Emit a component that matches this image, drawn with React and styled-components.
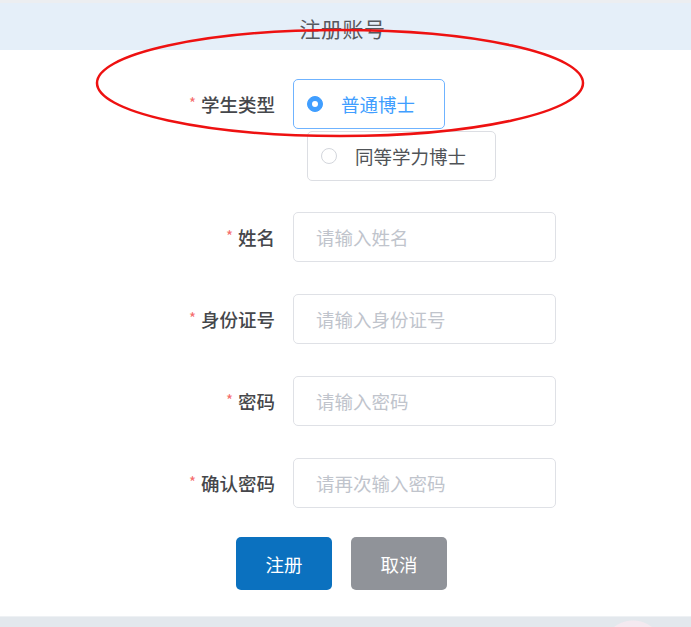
import styled, { createGlobalStyle } from "styled-components"

const GlobalStyle = createGlobalStyle`
  html, body, #root {
    height: 100%;
  }
  body {
    margin: 0;
    background: #ffffff;
    font-family: "Noto Sans CJK SC", "Noto Sans", "Liberation Sans", sans-serif;
  }
`;

const Page = styled.div`
  position: relative;
  display: flex;
  flex-direction: column;
  height: 100vh;
  overflow: hidden;
  border-top: 3px solid #eceef1;
  box-sizing: border-box;
`;

const Header = styled.div`
  flex-shrink: 0;
  height: 47px;
  box-sizing: border-box;
  padding: 2px 6px 0 0;
  background: #e5eff9;
  display: flex;
  align-items: center;
  justify-content: center;
  color: #56595e;
  font-size: 21px;
  letter-spacing: 0.5px;
`;

const Body = styled.div`
  flex: 1;
  padding-top: 29px;
`;

const Row = styled.div`
  display: flex;
  align-items: flex-start;
  margin-bottom: ${p => p.gap ?? 32}px;
`;

const Label = styled.label`
  width: 293px;
  box-sizing: border-box;
  padding-right: 18px;
  height: 50px;
  display: flex;
  align-items: center;
  justify-content: flex-end;
  color: #45474b;
  font-size: 18.5px;
  font-weight: 500;
`;

const Star = styled.span`
  color: #f56c6c;
  font-size: 15px;
  font-weight: 400;
  margin-right: 5px;
  position: relative;
  top: -2px;
`;

const RadioGroup = styled.div`
  display: flex;
  flex-direction: column;
  align-items: flex-start;
  gap: 2px;
`;

const RadioBox = styled.div`
  height: 50px;
  box-sizing: border-box;
  display: flex;
  align-items: center;
  padding: 0 29px 0 13px;
  margin-left: ${p => (p.indent ? 14 : 0)}px;
  border: 1.5px solid ${p => (p.checked ? "#6fb3ff" : "#dcdee3")};
  border-radius: 5px;
  color: ${p => (p.checked ? "#409eff" : "#505357")};
  font-size: 18.5px;
`;

const Dot = styled.span`
  width: 16px;
  height: 16px;
  box-sizing: border-box;
  border-radius: 50%;
  margin-right: 18px;
  display: flex;
  align-items: center;
  justify-content: center;
  background: ${p => (p.checked ? "#409eff" : "#fff")};
  border: 1.5px solid ${p => (p.checked ? "#409eff" : "#d3d6dc")};

  &::after {
    content: "";
    width: 6px;
    height: 6px;
    border-radius: 50%;
    background: #fff;
    display: ${p => (p.checked ? "block" : "none")};
  }
`;

const Input = styled.input`
  width: 263px;
  height: 50px;
  box-sizing: border-box;
  border: 1.5px solid #dfe1e6;
  border-radius: 5px;
  padding: 0 0 0 22px;
  font-size: 18.5px;
  font-family: inherit;
  color: #606266;
  outline: none;

  &::placeholder {
    color: #c0c4cc;
  }
`;

const Actions = styled.div`
  display: flex;
  gap: 19px;
  padding-left: 236px;
  padding-top: 29px;
`;

const Button = styled.button`
  width: 96px;
  height: 53px;
  border: none;
  border-radius: 5px;
  background: ${p => (p.variant === "primary" ? "#0b71bf" : "#909399")};
  color: #fff;
  font-size: 18.5px;
  font-family: inherit;
`;

const Footer = styled.div`
  flex-shrink: 0;
  height: 10px;
  background:
    radial-gradient(circle at 633px 34px, #f4e9f0 30px, transparent 31px),
    #e3e8ed;
  border-top: 1px solid #eef1f4;
`;

const Mark = styled.svg`
  position: absolute;
  left: 0;
  top: 0;
  pointer-events: none;
`;

const fields = [
  { label: "姓名", placeholder: "请输入姓名", type: "text" },
  { label: "身份证号", placeholder: "请输入身份证号", type: "text" },
  { label: "密码", placeholder: "请输入密码", type: "password" },
  { label: "确认密码", placeholder: "请再次输入密码", type: "password" },
]

const App = () => (
  <>
    <GlobalStyle />
    <Page>
      <Header>注册账号</Header>
      <Body>
        <Row gap={31}>
          <Label><Star>*</Star>学生类型</Label>
          <RadioGroup>
            <RadioBox checked>
              <Dot checked />
              普通博士
            </RadioBox>
            <RadioBox indent>
              <Dot />
              同等学力博士
            </RadioBox>
          </RadioGroup>
        </Row>
        {fields.map((f, i) => (
          <Row key={f.label} gap={i === fields.length - 1 ? 0 : 32}>
            <Label><Star>*</Star>{f.label}</Label>
            <Input type={f.type} placeholder={f.placeholder} />
          </Row>
        ))}
        <Actions>
          <Button variant="primary">注册</Button>
          <Button>取消</Button>
        </Actions>
      </Body>
      <Footer />
      <Mark width="691" height="627" viewBox="0 0 691 627">
        <ellipse cx="340" cy="80" rx="243" ry="53" fill="none" stroke="#ee1111" strokeWidth="2.5" />
      </Mark>
    </Page>
  </>
)

export default App
